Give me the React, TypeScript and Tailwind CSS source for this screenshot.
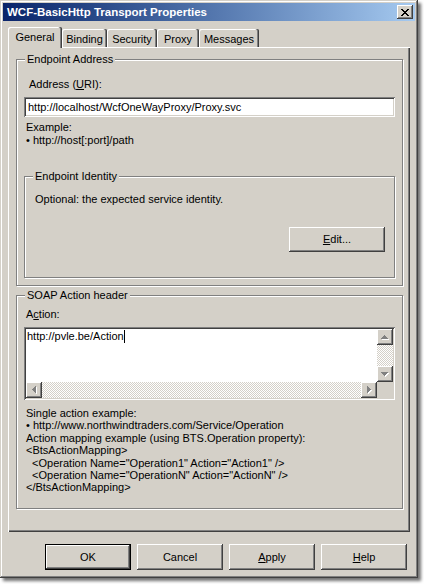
import React from "react";

const raised =
  "shadow-[inset_-1px_-1px_#404040,inset_1px_1px_#fff,inset_-2px_-2px_#808080,inset_2px_2px_#d4d0c8]";
const sunken =
  "shadow-[inset_1px_1px_#808080,inset_-1px_-1px_#fff,inset_2px_2px_#404040,inset_-2px_-2px_#d4d0c8]";
const etched = "border border-[#808080] shadow-[inset_1px_1px_#fff,1px_1px_#fff]";
const dither =
  "bg-[repeating-conic-gradient(#fff_0_25%,#d4d0c8_0_50%)] bg-[length:2px_2px]";

function CloseGlyph() {
  return (
    <svg width="8" height="7" viewBox="0 0 8 7" shapeRendering="crispEdges">
      <path
        fill="#000"
        d="M0 0h2v1H0zM6 0h2v1H6zM1 1h2v1H1zM5 1h2v1H5zM2 2h4v1H2zM3 3h2v1H3zM2 4h4v1H2zM1 5h2v1H1zM5 5h2v1H5zM0 6h2v1H0zM6 6h2v1H6z"
      />
    </svg>
  );
}

function Arrow({ dir }: { dir: "up" | "down" | "left" | "right" }) {
  const shapes: Record<string, string> = {
    up: "M7 6h1v1H7zM6 7h3v1H6zM5 8h5v1H5zM4 9h7v1H4z",
    down: "M4 6h7v1H4zM5 7h5v1H5zM6 8h3v1H6zM7 9h1v1H7z",
    left: "M6 7h1v1H6zM7 6h1v3H7zM8 5h1v5H8zM9 4h1v7H9z",
    right: "M6 4h1v7H6zM7 5h1v5H7zM8 6h1v3H8zM9 7h1v1H9z",
  };
  return (
    <div className={`w-[16px] h-[16px] bg-[#d4d0c8] ${raised} shrink-0`}>
      <svg width="16" height="16" viewBox="0 0 16 16" shapeRendering="crispEdges">
        <path fill="#fff" d={shapes[dir]} transform="translate(1 1)" />
        <path fill="#808080" d={shapes[dir]} />
      </svg>
    </div>
  );
}

function Tab({ label, width, active }: { label: string; width: string; active?: boolean }) {
  if (active) {
    return (
      <div
        className={`${width} h-[21px] -mb-px relative z-10 bg-[#d4d0c8] rounded-tl-[2px] rounded-tr-[2px] shadow-[inset_-1px_0_#404040,inset_-2px_0_#808080,inset_1px_1px_#fff] flex items-start justify-center pt-[4px] leading-[13px]`}
      >
        {label}
      </div>
    );
  }
  return (
    <div
      className={`${width} h-[18px] bg-[#d4d0c8] rounded-tl-[2px] rounded-tr-[2px] shadow-[inset_-1px_0_#404040,inset_-2px_0_#808080,inset_1px_1px_#fff] flex items-start justify-center pt-[4px] leading-[13px]`}
    >
      {label}
    </div>
  );
}

function Button({ children, primary, className = "" }: { children: React.ReactNode; primary?: boolean; className?: string }) {
  return (
    <div
      className={`${className} bg-[#d4d0c8] flex items-center justify-center leading-[13px] ${
        primary ? "border border-black " : ""
      }${raised}`}
    >
      {children}
    </div>
  );
}

export default function App() {
  return (
    <div className="min-h-screen bg-white font-['Liberation_Sans',Arial,sans-serif] text-[11px] text-black">
      <div className="w-[418px] h-[578px] bg-[#d4d0c8] p-[3px] flex flex-col shadow-[inset_-1px_-1px_#404040,inset_1px_1px_#d4d0c8,inset_-2px_-2px_#808080,inset_2px_2px_#fff,3px_3px_3px_rgba(0,0,0,0.55)]">
        {/* title bar */}
        <div className="h-[18px] bg-linear-to-r from-[#0a246a] to-[#a6caf0] flex items-center justify-between pl-[4px] pr-[2px]">
          <span className="text-white font-bold text-[11.5px] leading-[14px]">WCF-BasicHttp Transport Properties</span>
          <div className={`w-[16px] h-[14px] bg-[#d4d0c8] ${raised} flex items-center justify-center`}>
            <CloseGlyph />
          </div>
        </div>

        <div className="px-[5px] flex flex-col">
          {/* tabs */}
          <div className="mt-[6px] h-[20px] flex items-end">
            <Tab label="General" width="w-[54px]" active />
            <Tab label="Binding" width="w-[45px]" />
            <Tab label="Security" width="w-[50px]" />
            <Tab label="Proxy" width="w-[42px]" />
            <Tab label="Messages" width="w-[60px]" />
          </div>

          {/* tab panel */}
          <div className="h-[485px] pt-[12px] pl-[8px] pr-[7px] flex flex-col shadow-[inset_1px_1px_#fff,inset_-1px_-1px_#404040,inset_-2px_-2px_#808080]">
            {/* Endpoint Address */}
            <div className={`relative h-[227px] ${etched} flex flex-col`}>
              <span className="absolute -top-[7px] left-[8px] px-[2px] bg-[#d4d0c8] leading-[13px]">Endpoint Address</span>
              <div className="mt-[18px] ml-[12px] leading-[13px]">
                Address (<span className="underline">U</span>RI):
              </div>
              <div className={`mt-[6px] mx-[7px] h-[20px] bg-white ${sunken} pl-[4px] flex items-center leading-[13px]`}>
                http://localhost/WcfOneWayProxy/Proxy.svc
              </div>
              <div className="mt-[4px] ml-[9px] leading-[13px]">
                <div>Example:</div>
                <div>• http://host[:port]/path</div>
              </div>
              {/* Endpoint Identity */}
              <div className={`relative mt-[29px] mx-[7px] h-[102px] ${etched} flex flex-col`}>
                <span className="absolute -top-[7px] left-[8px] px-[2px] bg-[#d4d0c8] leading-[13px]">Endpoint Identity</span>
                <div className="mt-[16px] ml-[10px] leading-[13px]">Optional: the expected service identity.</div>
                <Button className="mt-[21px] self-end mr-[9px] w-[96px] h-[25px]">
                  <span>
                    <span className="underline">E</span>dit...
                  </span>
                </Button>
              </div>
            </div>

            {/* SOAP Action header */}
            <div className={`relative mt-[9px] h-[214px] ${etched} flex flex-col`}>
              <span className="absolute -top-[7px] left-[8px] px-[2px] bg-[#d4d0c8] leading-[13px]">SOAP Action header</span>
              <div className="mt-[12px] ml-[9px] leading-[13px]">
                A<span className="underline">c</span>tion:
              </div>
              <div className={`mt-[6px] mx-[7px] h-[73px] bg-white ${sunken} p-[2px] grid grid-cols-[1fr_16px] grid-rows-[1fr_16px]`}>
                <div className="pl-[1px] pt-[1px] leading-[13px] flex items-start">
                  <span>http://pvle.be/Action</span>
                  <span className="w-px h-[13px] bg-black" />
                </div>
                <div className="flex flex-col">
                  <Arrow dir="up" />
                  <div className={`flex-1 ${dither}`} />
                  <Arrow dir="down" />
                </div>
                <div className="flex">
                  <Arrow dir="left" />
                  <div className={`flex-1 ${dither}`} />
                  <Arrow dir="right" />
                </div>
                <div className="bg-[#d4d0c8]" />
              </div>
              <div className="mt-[7px] ml-[9px] leading-[12.4px] whitespace-pre">
                <div>Single action example:</div>
                <div>• http://www.northwindtraders.com/Service/Operation</div>
                <div>Action mapping example (using BTS.Operation property):</div>
                <div>{"<BtsActionMapping>"}</div>
                <div>{'  <Operation Name="Operation1" Action="Action1" />'}</div>
                <div>{'  <Operation Name="OperationN" Action="ActionN" />'}</div>
                <div>{"</BtsActionMapping>"}</div>
              </div>
            </div>
          </div>

          {/* dialog buttons */}
          <div className="mt-[12px] pr-[3px] flex justify-end gap-[6px]">
            <Button primary className="w-[86px] h-[26px]">OK</Button>
            <Button className="w-[86px] h-[26px]">Cancel</Button>
            <Button className="w-[86px] h-[26px]">
              <span>
                <span className="underline">A</span>pply
              </span>
            </Button>
            <Button className="w-[86px] h-[26px]">
              <span>
                <span className="underline">H</span>elp
              </span>
            </Button>
          </div>
        </div>
      </div>
    </div>
  );
}
